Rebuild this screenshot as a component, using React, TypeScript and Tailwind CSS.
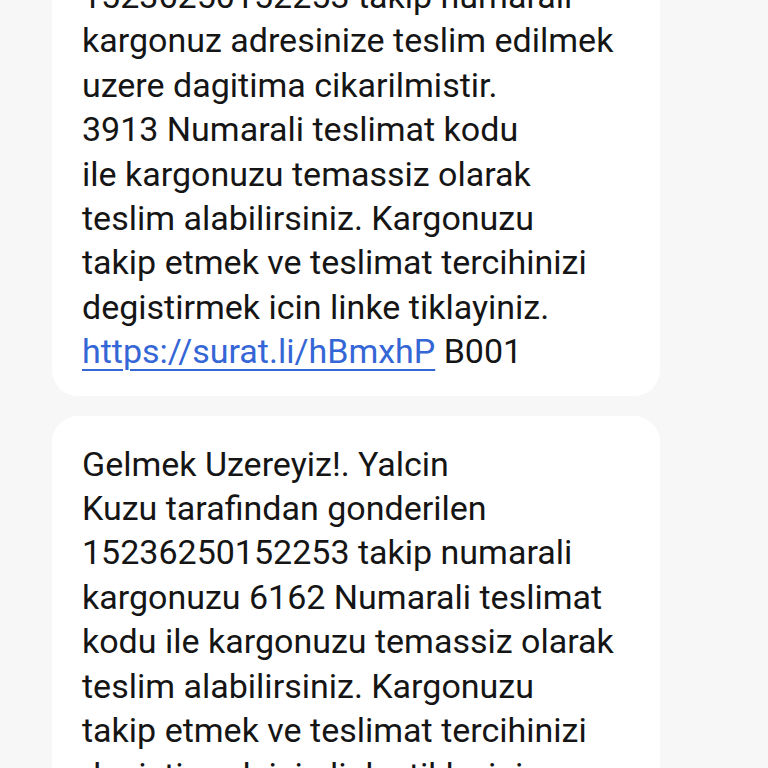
import React from 'react';

const first = [
  '15236250152253 takip numarali',
  'kargonuz adresinize teslim edilmek',
  'uzere dagitima cikarilmistir.',
  '3913 Numarali teslimat kodu',
  'ile kargonuzu temassiz olarak',
  'teslim alabilirsiniz. Kargonuzu',
  'takip etmek ve teslimat tercihinizi',
  'degistirmek icin linke tiklayiniz.',
];

const second = [
  'Gelmek Uzereyiz!. Yalcin',
  'Kuzu tarafindan gonderilen',
  '15236250152253 takip numarali',
  'kargonuzu 6162 Numarali teslimat',
  'kodu ile kargonuzu temassiz olarak',
  'teslim alabilirsiniz. Kargonuzu',
  'takip etmek ve teslimat tercihinizi',
  'degistirmek icin linke tiklayiniz.',
];

export default function App() {
  return (
    <div
      className="w-[768px] h-[768px] overflow-hidden bg-[#f7f7f7] text-[#151515]"
      style={{ fontFamily: 'Roboto, "Noto Sans", sans-serif' }}
    >
      <div className="-mt-[26px] pl-[52px] flex flex-col gap-[20px]">
        <div className="w-[608px] bg-white rounded-b-[26px] px-[30px] pb-[22px] text-[34px] leading-[44.4px] whitespace-nowrap">
          {first.map((l, i) => (
            <div key={i}>{l}</div>
          ))}
          <div>
            <span className="text-[#3566d6] underline underline-offset-[6px] decoration-[2px]">https://surat.li/hBmxhP</span> B001
          </div>
        </div>
        <div className="w-[608px] bg-white rounded-[26px] px-[30px] pt-[26px] pb-[22px] text-[34px] leading-[44.4px] whitespace-nowrap">
          {second.map((l, i) => (
            <div key={i}>{l}</div>
          ))}
        </div>
      </div>
    </div>
  );
}
